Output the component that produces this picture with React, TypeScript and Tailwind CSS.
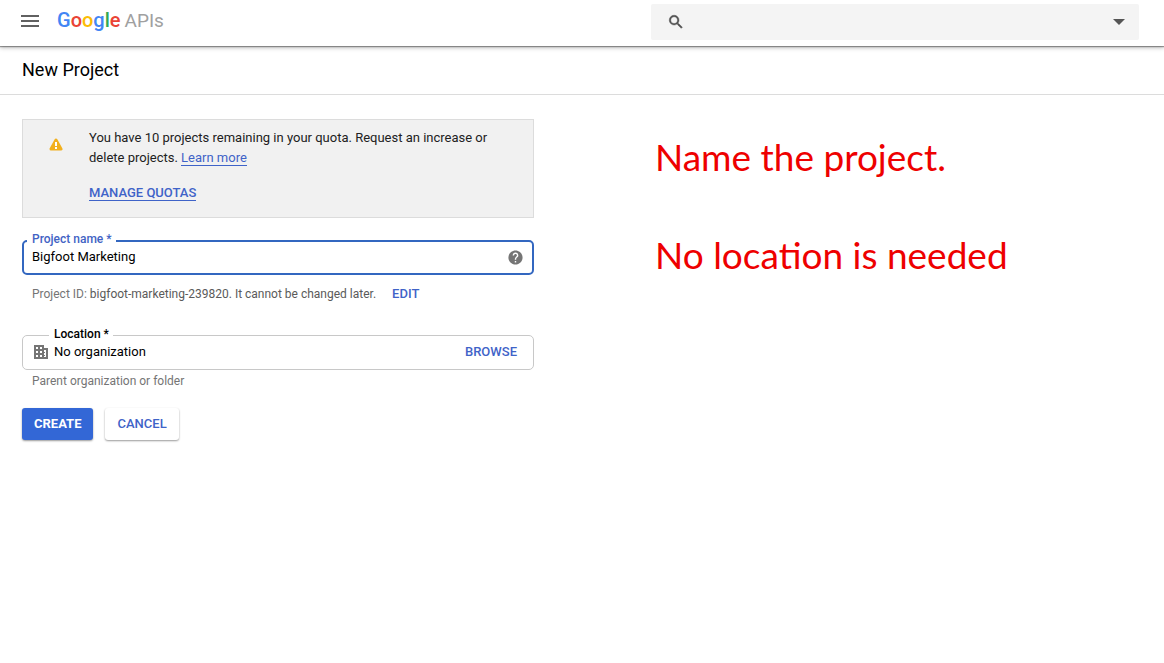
import { useState } from 'react';
import type { ReactNode } from 'react';

const MenuIcon = () => (
  <svg className="w-6 h-6" viewBox="0 0 24 24" fill="#616161" aria-hidden="true">
    <path d="M3 18h18v-2H3v2zm0-5h18v-2H3v2zm0-7v2h18V6H3z" />
  </svg>
);

const SearchIcon = () => (
  <svg className="w-[18px] h-[18px]" viewBox="0 0 24 24" fill="#505050" stroke="#505050" strokeWidth="0.6" aria-hidden="true">
    <path d="M15.5 14h-.79l-.28-.27A6.471 6.471 0 0 0 16 9.5 6.5 6.5 0 1 0 9.5 16c1.61 0 3.09-.59 4.23-1.57l.27.28v.79l5 4.99L20.49 19l-4.99-5zm-6 0C7.01 14 5 11.99 5 9.5S7.01 5 9.5 5 14 7.01 14 9.5 11.99 14 9.5 14z" />
  </svg>
);

const WarningIcon = () => (
  <svg className="w-[14px] h-[13px]" viewBox="0 0 14 13" aria-hidden="true">
    <path d="M7 2 12 11H2Z" fill="#f2b01e" stroke="#f2b01e" strokeWidth="3" strokeLinejoin="round" />
    <path d="M6 4h2v4H6zM6 9h2v2H6z" fill="#fff" />
  </svg>
);

const HelpIcon = () => (
  <svg className="w-[17px] h-[17px]" viewBox="0 0 24 24" fill="#757575" aria-hidden="true">
    <path d="M12 2C6.48 2 2 6.48 2 12s4.48 10 10 10 10-4.48 10-10S17.52 2 12 2zm1 17h-2v-2h2v2zm2.07-7.75l-.9.92C13.45 12.9 13 13.5 13 15h-2v-.5c0-1.1.45-2.1 1.17-2.83l1.24-1.26c.37-.36.59-.86.59-1.41 0-1.1-.9-2-2-2s-2 .9-2 2H8c0-2.21 1.79-4 4-4s4 1.79 4 4c0 .88-.36 1.68-.93 2.25z" />
  </svg>
);

const OrganizationIcon = () => (
  <svg className="w-4 h-4 shrink-0" viewBox="0 0 16 16" fill="#757575" aria-hidden="true">
    <path
      fillRule="evenodd"
      d="M1 1h10v3h4v11H1V1zm2 2v2h2V3H3zm4 0v2h2V3H7zM3 7v2h2V7H3zm4 0v2h2V7H7zm-4 4v2h2v-2H3zm4 0v2h2v-2H7zm4-5v2h1v1h-1v2h1v1h-1v1h2V6h-2z"
    />
  </svg>
);

const Header = () => (
  <header className="relative flex h-[46px] items-center bg-white pl-[18px] pr-[25px] shadow-[0_1px_1px_rgba(0,0,0,0.35),0_2px_4px_rgba(0,0,0,0.25)]">
    <button type="button" aria-label="Navigation menu" className="mb-1">
      <MenuIcon />
    </button>
    <a href="#" className="ml-[15px] mb-[6px] flex items-baseline gap-1 text-[20px] leading-6">
      <span className="font-medium">
        <span className="text-[#4285f4]">G</span>
        <span className="text-[#ea4335]">o</span>
        <span className="text-[#fbbc05]">o</span>
        <span className="text-[#4285f4]">g</span>
        <span className="text-[#34a853]">l</span>
        <span className="text-[#ea4335]">e</span>
      </span>
      <span className="text-[19px] text-[#a0a0a0]">APIs</span>
    </a>
    <div className="ml-auto mb-[2px] flex h-9 w-[488px] items-center rounded-[2px] bg-[#f4f4f4] pl-4 pr-3">
      <SearchIcon />
      <input type="text" aria-label="Search" className="min-w-0 flex-1 bg-transparent px-3 text-sm outline-none" />
      <button type="button" aria-label="Search options">
        <svg className="w-4 h-4" viewBox="0 0 16 16" fill="#555" aria-hidden="true">
          <path d="M2 5h12L8 11z" />
        </svg>
      </button>
    </div>
  </header>
);

const QuotaNotice = () => (
  <div className="flex border border-[#dcdcdc] bg-[#f1f1f1] pb-[14px] pl-[26px] pr-8 pt-2 text-[13px] leading-5">
    <div className="mt-[10px] w-10 shrink-0">
      <WarningIcon />
    </div>
    <div>
      <p>
        You have 10 projects remaining in your quota. Request an increase or delete projects.{' '}
        <a href="#" className="border-b border-[#3f63c8] text-[#3f63c8]">Learn more</a>
      </p>
      <p className="mt-[15px]">
        <a href="#" className="border-b border-[#3f63c8] font-medium text-[#3f63c8]">MANAGE QUOTAS</a>
      </p>
    </div>
  </div>
);

const TextButton = ({ children }: { children: ReactNode }) => (
  <button type="button" className="text-[13px] font-medium text-[#3f63c8]">
    {children}
  </button>
);

export default function App() {
  const [name, setName] = useState('Bigfoot Marketing');
  const [location, setLocation] = useState('No organization');

  return (
    <div className="min-h-screen bg-white font-[Roboto,sans-serif] text-[13px] text-[#212121]">
      <Header />
      <div className="flex h-[49px] items-center border-b border-[#dcdcdc] px-[22px]">
        <h1 className="text-[18px] leading-6 text-black">New Project</h1>
      </div>

      <main className="flex flex-wrap items-start gap-x-[121px] px-[22px] pt-6">
        <form className="w-full max-w-[512px]" onSubmit={(e) => e.preventDefault()}>
          <QuotaNotice />

          <fieldset className="mt-[15px] rounded-[5px] border-2 border-[#3367c0] pb-2 pl-[3px] pr-2">
            <legend className="pl-[5px] pr-1 pb-1 text-xs leading-3 font-medium text-[#4263c4]">
              <label htmlFor="project-name">Project name *</label>
            </legend>
            <div className="flex h-4 items-center pl-[5px]">
              <input
                id="project-name"
                type="text"
                value={name}
                onChange={(e) => setName(e.target.value)}
                className="min-w-0 flex-1 bg-transparent leading-4 text-black outline-none"
              />
              <button type="button" aria-label="Help">
                <HelpIcon />
              </button>
            </div>
          </fieldset>
          <p className="mt-[11px] flex flex-wrap items-center gap-x-4 pl-[10px] text-xs leading-4 text-[#757575]">
            <span>
              Project ID: <span className="text-[#5a5a5a]">bigfoot-marketing-239820. It cannot be changed later.</span>
            </span>
            <TextButton>EDIT</TextButton>
          </p>

          <fieldset className="mt-[26px] rounded-[5px] border border-[#c8c8c8] pt-px pb-[9px] pl-[10px] pr-4">
            <legend className="ml-4 pl-[5px] pr-1 pb-[3px] text-xs leading-3 font-medium text-black">
              <label htmlFor="location">Location *</label>
            </legend>
            <div className="flex h-4 items-center gap-[5px]">
              <OrganizationIcon />
              <input
                id="location"
                type="text"
                value={location}
                onChange={(e) => setLocation(e.target.value)}
                className="min-w-0 flex-1 bg-transparent leading-4 text-black outline-none"
              />
              <TextButton>BROWSE</TextButton>
            </div>
          </fieldset>
          <p className="mt-[3px] pl-[10px] text-xs leading-4 text-[#757575]">Parent organization or folder</p>

          <div className="mt-[19px] flex gap-3">
            <button type="submit" className="h-8 rounded-[3px] bg-[#3367d6] px-3 font-bold text-white shadow-[0_1px_2px_rgba(0,0,0,0.4)]">
              CREATE
            </button>
            <button type="button" className="h-8 rounded-[3px] bg-white px-3 font-medium text-[#3f63c8] shadow-[0_1px_2px_rgba(0,0,0,0.4)]">
              CANCEL
            </button>
          </div>
        </form>

        <div className="mt-[14px] space-y-[50px] font-[Lato,sans-serif] text-[37px] leading-[48px] text-[#ee0000]">
          <p>Name the project.</p>
          <p>No location is needed</p>
        </div>
      </main>
    </div>
  );
}
